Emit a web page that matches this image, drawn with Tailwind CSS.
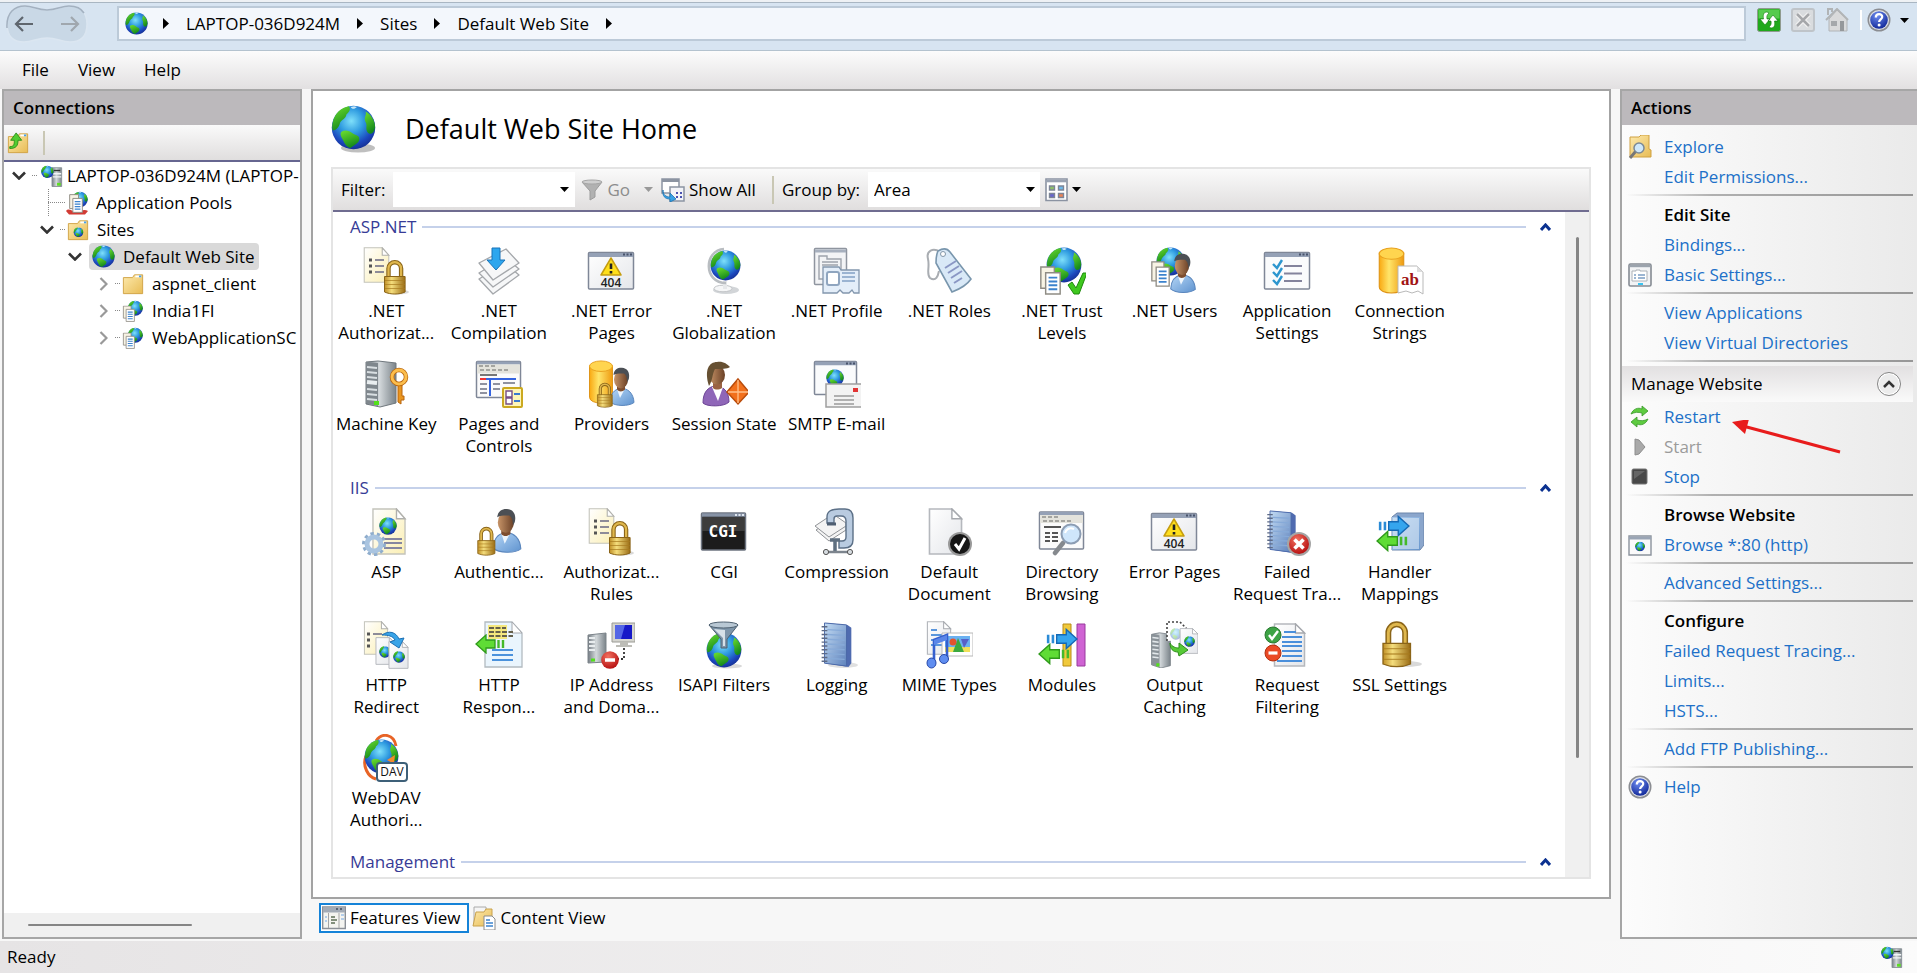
<!DOCTYPE html>
<html lang="en">
<head>
    <meta charset="UTF-8" />
    <meta name="viewport" content="width=device-width, initial-scale=1.0" />
    <title>Internet Information Services (IIS) Manager</title>
    <script src="https://cdn.jsdelivr.net/npm/@tailwindcss/browser@4"></script>
</head>
<body class="h-screen min-h-[640px] flex flex-col overflow-hidden bg-[#f7f7f7] font-['Open_Sans','Noto_Sans',sans-serif] text-[17px] leading-[22px] text-black">

<!-- Shared gradients -->
<svg class="absolute size-0" aria-hidden="true">
    <defs>
        <radialGradient id="gBlue" cx=".45" cy=".35" r=".7"><stop offset="0" stop-color="#7fe0fa" /><stop offset=".4" stop-color="#2f9be0" /><stop offset=".75" stop-color="#1c47bd" /><stop offset="1" stop-color="#142a8a" /></radialGradient>
        <linearGradient id="gGreen" x2=".4" y2="1"><stop offset="0" stop-color="#6fe02f" /><stop offset="1" stop-color="#158a1c" /></linearGradient>
        <linearGradient id="gGold" x2="1"><stop offset="0" stop-color="#c08f26" /><stop offset=".35" stop-color="#f4dd7c" /><stop offset="1" stop-color="#9b6d16" /></linearGradient>
        <linearGradient id="gDb" x2="1"><stop offset="0" stop-color="#f9a912" /><stop offset=".4" stop-color="#ffe56a" /><stop offset="1" stop-color="#ee9a10" /></linearGradient>
        <linearGradient id="gPage" x2="1" y2="1"><stop offset="0" stop-color="#ffffff" /><stop offset="1" stop-color="#fbefb4" /></linearGradient>
        <linearGradient id="gWhite" x2="1" y2="1"><stop offset="0" stop-color="#ffffff" /><stop offset="1" stop-color="#e4e6ea" /></linearGradient>
        <linearGradient id="gShirt" x2="1" y2="1"><stop offset="0" stop-color="#b5d6f6" /><stop offset="1" stop-color="#5f93cf" /></linearGradient>
        <linearGradient id="gSkin" x2="1"><stop offset="0" stop-color="#c79468" /><stop offset="1" stop-color="#6a4026" /></linearGradient>
        <linearGradient id="gSteel" x2="1"><stop offset="0" stop-color="#747c83" /><stop offset=".45" stop-color="#d3d8db" /><stop offset="1" stop-color="#7b848a" /></linearGradient>
        <linearGradient id="gFolder" x2="1" y2="1"><stop offset="0" stop-color="#fdeaae" /><stop offset="1" stop-color="#e8bc55" /></linearGradient>
        <linearGradient id="gBook" x2="1" y2="1"><stop offset="0" stop-color="#c2dbf3" /><stop offset="1" stop-color="#5f83bd" /></linearGradient>
        <radialGradient id="gRed" cx=".4" cy=".3" r=".7"><stop offset="0" stop-color="#f2705f" /><stop offset="1" stop-color="#b81313" /></radialGradient>
        <radialGradient id="gNavy" cx=".4" cy=".25" r=".8"><stop offset="0" stop-color="#6f8df0" /><stop offset="1" stop-color="#0e2596" /></radialGradient>
    </defs>
</svg>

<!-- Icon symbols -->
<svg class="hidden" aria-hidden="true">
    <symbol id="globe" viewBox="0 0 24 24">
        <circle cx="12" cy="12" r="11.6" fill="url(#gBlue)" />
        <path fill="url(#gGreen)" d="M1 9C2 4.500 5.500 1.400 9.500.7c1.200 1.500.3 3.200-1.300 4.300C8 7.400 5.400 7.600 4.700 9.800 4.300 11.500 3 13.300 1 13.600.4 12 .6 10.500 1 9z" />
        <path fill="url(#gGreen)" d="M18.500 3.500c3 1.700 4.800 4.700 5 8-.2 2.400-1.200 4-2.700 3.800-1.700-.3-2.100-2.200-1.900-4 .3-1.700-.9-2.300-.9-4 .1-1.200.9-2.100.5-3.800z" />
        <path fill="url(#gGreen)" d="M5.600 14.200c2-1.200 4.300-.4 5.900.9 1.500 1.100 3.700 1.100 3.600 3.100-.2 2.300-2.800 3-4.800 4.700-2-.4-3.100-2.300-3.900-4.200-.7-1.500-2-3.200-.8-4.500z" />
        <path fill="#e8fbff" opacity=".8" d="M10.500 1c1 1.500 2 1.300 3.300.1L12.300.6z" />
    </symbol>
    <symbol id="lock" viewBox="0 0 24 36">
        <path d="M5.500 19V9.500a6.300 6.300 0 0 1 12.600 0V19" fill="none" stroke="#8a6418" stroke-width="4.400" />
        <path d="M5.500 19V9.500a6.300 6.300 0 0 1 12.600 0V19" fill="none" stroke="#dfb74d" stroke-width="2.200" />
        <path d="M1.500 17.500h20.600V33c-6 2.700-14.500 2.700-20.600 0z" fill="url(#gGold)" stroke="#8a6418" />
        <path d="M2 21.500h20M2 25.500h20M2 29.500h20" stroke="#a87b1e" opacity=".7" />
    </symbol>
    <symbol id="person" viewBox="0 0 28 40">
        <path d="M2 35c.5-8 4-12.500 10-13.500 8-.8 13.500 5 14 14-5 4-19 4-24-.5z" fill="url(#gShirt)" stroke="#5a86bd" />
        <path d="M9 22l3 9 5-9.500z" fill="#eef5fc" />
        <path d="M9 17h8v5.500c-2.500 2.500-6 2.500-8 0z" fill="#7d4d2f" />
        <ellipse cx="13" cy="12.500" rx="7" ry="9" fill="url(#gSkin)" />
        <path d="M5.500 8C6 2 10.500.5 14 .8c5 .4 8 4.200 7 10.200-.3 1.700-1 3-2 4 .3-4-.5-6.500-3-8.500-3.500 0-7.500-.3-10.500 1.500z" fill="#4b4f54" />
    </symbol>
    <symbol id="page" viewBox="0 0 32 44">
        <path d="M1 1h22l8 9v33H1z" fill="url(#gPage)" stroke="#c3c3bb" stroke-width="1.300" />
        <path d="M23 1v9h8z" fill="#fff" stroke="#b0b0ac" stroke-width="1.300" />
    </symbol>
    <symbol id="sheet" viewBox="0 0 32 44">
        <path d="M1 1h21l9 9v33H1z" fill="url(#gWhite)" stroke="#b5b8bd" stroke-width="1.500" />
        <path d="M22 1v9h9z" fill="#fff" stroke="#a5a8ad" stroke-width="1.300" />
    </symbol>
    <symbol id="docs" viewBox="0 0 22 30">
        <path d="M1 1h14v22H1z" fill="#f7f3e4" stroke="#8f8c84" stroke-width="1.500" />
        <path d="M6 7h15v22H6z" fill="#fff" stroke="#8f8c84" stroke-width="1.500" />
        <path d="M9 12h9M9 16h9M9 20h9M9 24h9" stroke="#3b82cd" stroke-width="2" />
    </symbol>
    <symbol id="server" viewBox="0 0 26 46">
        <path d="M1 3l10-2 14 2v40l-12 3-12-4z" fill="url(#gSteel)" stroke="#777f85" />
        <path d="M1 3l10 1v41L1 42z" fill="#8a9298" />
        <path d="M2 7l8 1M2 12l8 1M2 17l8 1M2 22l8 1M2 27l8 1M2 32l8 1" stroke="#e2e7ea" stroke-width="2" />
        <rect x="7" y="40" width="4" height="4" fill="#53e01c" />
    </symbol>
    <symbol id="db" viewBox="0 0 26 46">
        <path d="M1 6v33c0 8 24 8 24 0V6z" fill="url(#gDb)" stroke="#dd9112" />
        <ellipse cx="13" cy="6.500" rx="12" ry="5.500" fill="#ffd54f" stroke="#e8a01c" />
    </symbol>
    <symbol id="book" viewBox="0 0 34 48">
        <path d="M6 1l23 2 4 3v37l-3 4-24-4z" fill="#4f6bb0" />
        <path d="M5 1l23 2v43L5 43z" fill="url(#gBook)" stroke="#4a68a8" />
        <path d="M8 8l18 1M8 13l18 1M8 18l18 1M8 23l18 1M8 28l18 1M8 33l18 1M8 38l18 1" stroke="#87aad8" stroke-width="1.400" />
        <path d="M2 5h6M2 9h6M2 13h6M2 17h6M2 21h6M2 25h6M2 29h6M2 33h6M2 37h6M2 41h6" stroke="#5d6a86" stroke-width="1.500" />
    </symbol>
    <symbol id="arrow-right" viewBox="0 0 30 20">
        <path d="M10 6h9V1l10 9-10 9v-5h-9z" fill="#35a5ee" stroke="#1569b5" stroke-width="1.300" />
        <path d="M2 6v8M6.500 6v8" stroke="#2b8bd6" stroke-width="2.400" />
    </symbol>
    <symbol id="arrow-left" viewBox="0 0 30 20">
        <path d="M20 6h-9V1L1 10l10 9v-5h9z" fill="#5fdc35" stroke="#2f9a1b" stroke-width="1.300" />
        <path d="M28 6v8M23.500 6v8" stroke="#45b92a" stroke-width="2.400" />
    </symbol>
    <symbol id="help" viewBox="0 0 24 24">
        <circle cx="12" cy="12" r="11.500" fill="#8b8d92" />
        <circle cx="12" cy="12" r="10" fill="#dfe1e6" />
        <circle cx="12" cy="12" r="8.800" fill="url(#gNavy)" />
        <path d="M8.800 9.500C8.800 5 15.400 5.200 15.200 9c-.1 2.300-3.100 2.500-3.100 5" fill="none" stroke="#fff" stroke-width="2.200" />
        <circle cx="12.100" cy="17" r="1.500" fill="#fff" />
    </symbol>
    <symbol id="host" viewBox="0 0 24 24">
        <path d="M12 3h10.500v20.500H12z" fill="url(#gSteel)" stroke="#878f95" />
        <path d="M14 6h7" stroke="#333" stroke-width="1.500" />
        <path d="M13 9.500h9M13 13h9" stroke="#f2f4f5" stroke-width="1.500" />
        <path d="M17.500 21h4" stroke="#5be01f" stroke-width="3" />
        <use href="#globe" x="0" y="0" width="14" height="15" />
    </symbol>
    <symbol id="folder" viewBox="0 0 24 24">
        <path d="M1.500 5h10l2-3h9v20.500h-21z" fill="url(#gFolder)" stroke="#cfa143" />
        <path d="M14.500 3.700h6.500" stroke="#fff" stroke-width="2" />
        <path d="M18.500 3.700h2.500" stroke="#4aa0e8" stroke-width="2" />
    </symbol>
    <symbol id="webapp" viewBox="0 0 24 24">
        <use href="#globe" x="6" y="0" width="17" height="18" />
        <use href="#docs" x="0" y="6" width="15" height="18" />
    </symbol>

    <!-- Feature icons, 48 by 48 -->
    <symbol id="f-authz" viewBox="0 0 48 48">
        <use href="#page" x="1" y="0" width="27" height="36" />
        <path d="M7 13h3M7 19h3M7 25h3" stroke="#555" stroke-width="3" />
        <path d="M13 13h9M13 19h9M13 25h9" stroke="#8d8b98" stroke-width="2" />
        <ellipse cx="36" cy="45" rx="11" ry="2.500" fill="#000" opacity=".15" />
        <use href="#lock" x="21" y="12" width="24" height="36" />
    </symbol>
    <symbol id="f-compile" viewBox="0 0 48 48">
        <g fill="#f6f7f8" stroke="#a4a7ab" stroke-width="1.300" stroke-linejoin="round">
            <path d="M4 32l26-16 14 12-26 19z" /><path d="M4 26l26-16 14 12-26 18z" /><path d="M4 16L31 2l13 14-26 17z" />
        </g>
        <path d="M17 1h8v12h5l-9 10-9-10h5z" fill="#2da6ee" stroke="#1873b8" />
    </symbol>
    <symbol id="f-error" viewBox="0 0 48 48">
        <rect x="1.500" y="5.500" width="45" height="36.500" rx="1" fill="url(#gWhite)" stroke="#7f8797" stroke-width="1.500" />
        <path d="M2 8h44" stroke="#95a1b6" stroke-width="4" /><path d="M36 7.500h2m1.500 0h2m1.500 0h2" stroke="#48536b" stroke-width="2" />
        <path d="M24 11l10 17H14z" fill="#ffdf1c" stroke="#c59d10" stroke-linejoin="round" stroke-width="1.500" />
        <path d="M24 16.500v5.500M24 24v2.500" stroke="#222" stroke-width="2.600" />
        <text x="24" y="39.500" text-anchor="middle" font-family="Open Sans" font-size="12" font-weight="600" fill="#222">404</text>
    </symbol>
    <symbol id="f-global" viewBox="0 0 48 48">
        <ellipse cx="26" cy="43" rx="13" ry="4" fill="#d2d5d8" /><ellipse cx="23" cy="41.500" rx="9" ry="3.300" fill="#f5f6f7" stroke="#c2c5c8" />
        <path d="M23 34h4v8h-4z" fill="#e6e8ea" />
        <path d="M24 2C4 3 3 36 26 36" fill="none" stroke="#b9bdc1" stroke-width="2.600" />
        <use href="#globe" x="10" y="3" width="31" height="31" />
    </symbol>
    <symbol id="f-profile" viewBox="0 0 48 48">
        <rect x="1.500" y="1.500" width="32" height="36" rx="1" fill="#f3f4f6" stroke="#8f959f" stroke-width="1.500" />
        <path d="M2 4h31" stroke="#a7b0be" stroke-width="3" />
        <path d="M6 9h8v3h14v20H6zM9 15h16M9 18h16" fill="none" stroke="#9ea3ac" stroke-width="1.400" />
        <path d="M10 20h16l2 3h18v23h-5l-2-3-3 3h-6l-3-3-3 3H10z" fill="#e4eef9" stroke="#8296ad" stroke-width="1.300" />
        <rect x="14" y="25" width="12" height="13" rx="2" fill="#fff" stroke="#8fa5bf" stroke-width="2" />
        <path d="M29 26h13M29 30h13M29 34h13" stroke="#9bb4d2" stroke-width="1.800" />
    </symbol>
    <symbol id="f-roles" viewBox="0 0 48 48">
        <path d="M15 5C8 0 1 4 3 12s-2 15 2 19c6 4 8-2 9-7" fill="none" stroke="#a9adb2" stroke-width="2" />
        <path d="M13 4c5-3 9-3 12 1l21 27c-4 6-11 10-19 13L11 16c0-5 0-8 2-12z" fill="#d9e9f7" stroke="#7996ad" stroke-width="1.600" />
        <circle cx="18" cy="7" r="2.500" fill="#fff" stroke="#8296a8" />
        <path d="M20 21l11-7M23 26l11-7M26 31l11-7M29 36l8-5" stroke="#8a97c4" stroke-width="2" />
    </symbol>
    <symbol id="f-trust" viewBox="0 0 48 48">
        <use href="#globe" x="8" y="0" width="36" height="36" />
        <use href="#docs" x="0" y="19" width="25" height="29" />
        <path d="M30 38l4-3 4 6 7-15h4l-8 21h-5z" fill="#3fc81e" stroke="#1f8a0c" />
    </symbol>
    <symbol id="f-users" viewBox="0 0 48 48">
        <use href="#globe" x="6" y="0" width="29" height="29" />
        <use href="#docs" x="-1" y="14" width="23" height="26" />
        <use href="#person" x="17" y="6" width="32" height="41" />
    </symbol>
    <symbol id="f-appset" viewBox="0 0 48 48">
        <rect x="1.500" y="5.500" width="45" height="36.500" rx="1" fill="#fafbfc" stroke="#7f8797" stroke-width="1.500" />
        <path d="M2 8h44" stroke="#95a1b6" stroke-width="4" /><path d="M36 7.500h2m1.500 0h2m1.500 0h2" stroke="#48536b" stroke-width="2" />
        <path d="M21 19h18M21 26.500h18M21 34h18" stroke="#83839c" stroke-width="1.800" />
        <path d="M10 17l4 4 5-8M10 25l4 4 5-8M10 33l4 4 5-8" fill="none" stroke="#2c96cf" stroke-width="2.400" />
    </symbol>
    <symbol id="f-conn" viewBox="0 0 48 48">
        <use href="#db" x="0" y="0" width="31" height="47" />
        <path d="M22 19h19l6 6v22l-5-3-6 2-6-2-8 2z" fill="#fff" stroke="#b9b9b9" />
        <path d="M41 19v6h6z" fill="#ddd" />
        <text x="34" y="38" text-anchor="middle" font-family="Liberation Serif" font-size="17" font-weight="700" fill="#a11414">ab</text>
    </symbol>
    <symbol id="f-key" viewBox="0 0 48 48">
        <path d="M4 2l12-1 18 2v40l-16 4-14-3z" fill="url(#gSteel)" stroke="#70787e" />
        <path d="M4 2l12 1v43L4 43z" fill="#7f878d" />
        <path d="M5 7l10 1M5 12l10 1M5 17l10 1M5 29l10 1M5 34l10 1M5 39l10 1" stroke="#d9dfe2" stroke-width="2" />
        <path d="M5 22l10 1" stroke="#e9eef0" stroke-width="4" /><path d="M12 43h5" stroke="#53e01c" stroke-width="4" />
        <path d="M36 24v18l3 2v-4h3v-4h-2V24z" fill="#e9951f" stroke="#b8650d" />
        <circle cx="37" cy="17" r="7" fill="none" stroke="#b8650d" stroke-width="4.500" /><circle cx="37" cy="17" r="7" fill="none" stroke="#fbbd4c" stroke-width="3" />
    </symbol>
    <symbol id="f-pages" viewBox="0 0 48 48">
        <rect x="1.500" y="1.500" width="44" height="36" rx="1" fill="#fbfbfb" stroke="#7f8797" stroke-width="1.500" />
        <path d="M2 3h43" stroke="#95a1b6" stroke-width="3" /><path d="M2 9h43" stroke="#e4e3dc" stroke-width="9" />
        <path d="M4 6h18M5 10h28" stroke="#a5a5a0" stroke-width="2" stroke-dasharray="4 2" />
        <path d="M5 15h17" stroke="#777" stroke-width="2" /><path d="M5 19h6" stroke="#e33" stroke-width="2" /><path d="M11 19h30M15 19v17" stroke="#3564df" stroke-width="2" />
        <path d="M5 24h7M5 29h7M5 33h7M18 24h7M18 29h7M28 23h12" stroke="#8f92a0" stroke-width="2" />
        <rect x="28" y="28" width="19" height="19" rx="1" fill="#fff6b8" stroke="#cba920" stroke-width="2" />
        <path d="M31 31h6v6h-6zM31 38h6v6h-6z" fill="#fff" stroke="#774f87" stroke-width="1.400" /><path d="M39 34h6M39 41h6" stroke="#3b7bd0" stroke-width="2" />
    </symbol>
    <symbol id="f-prov" viewBox="0 0 48 48">
        <use href="#db" x="1" y="0" width="26" height="44" />
        <use href="#person" x="19" y="7" width="32" height="40" />
        <use href="#lock" x="9" y="22" width="18" height="26" />
    </symbol>
    <symbol id="f-session" viewBox="0 0 48 48">
        <path d="M3 43c0-11 5-16 12-17 8 0 14 5 14 16-5 5-22 5-26 1z" fill="#8f66b8" stroke="#6d4595" />
        <path d="M12 27l6 14 5-14z" fill="#fff" />
        <path d="M13 20h9v8c-3 2-7 2-9 0z" fill="#9a6243" />
        <ellipse cx="17" cy="15" rx="8" ry="9.500" fill="url(#gSkin)" />
        <path d="M9 26C4 10 9 2 17 2c6-1 10 2 13 5-3 2-9 2-15 2-3 5-2 11-6 17z" fill="#665032" />
        <path d="M38 19l11 13-11 12-11-12z" fill="#f2701c" stroke="#b94c0c" stroke-width="1.500" /><path d="M38 20v23M28 32h20" stroke="#ffc08a" stroke-width="1.300" />
    </symbol>
    <symbol id="f-smtp" viewBox="0 0 48 48">
        <rect x="1.500" y="1.500" width="42" height="33" rx="1" fill="#fafbfc" stroke="#7f8797" stroke-width="1.500" />
        <path d="M2 3.500h41" stroke="#95a1b6" stroke-width="3.500" /><path d="M33 3.500h2m1.500 0h2m1.500 0h2" stroke="#48536b" stroke-width="2" />
        <use href="#globe" x="13" y="9" width="18" height="18" />
        <rect x="13" y="24" width="36" height="23" fill="#f3f3f3" stroke="#9e9e9e" stroke-width="1.500" />
        <path d="M40 28h5v4h-5z" fill="#e23434" /><path d="M21 36h20M21 40h20M21 44h20" stroke="#9b9b9b" stroke-width="1.500" />
    </symbol>
    <symbol id="f-asp" viewBox="0 0 48 48">
        <use href="#page" x="9" y="0" width="36" height="47" />
        <use href="#globe" x="17" y="9" width="18" height="18" />
        <path d="M22 31h18M22 35h18M22 40h18" stroke="#8586a0" stroke-width="2" />
        <circle cx="12" cy="36" r="10" fill="none" stroke="#8fadcd" stroke-width="4" stroke-dasharray="3.200 3" /><circle cx="12" cy="36" r="7" fill="none" stroke="#a9c4e0" stroke-width="5" />
    </symbol>
    <symbol id="f-authn" viewBox="0 0 48 48">
        <use href="#person" x="12" y="0" width="40" height="46" />
        <use href="#lock" x="1" y="18" width="21" height="30" />
    </symbol>
    <symbol id="f-cgi" viewBox="0 0 48 48">
        <rect x="1.500" y="5" width="44" height="37" rx="1" fill="#1c1c1c" stroke="#6d7480" stroke-width="1.500" />
        <path d="M2 9h43v14H2z" fill="#4a4a4a" opacity=".7" /><path d="M2 7h43" stroke="#8793a6" stroke-width="3.500" /><path d="M35 7h2m1.500 0h2m1.500 0h2" stroke="#dfe6ef" stroke-width="2" />
        <text x="23" y="29" text-anchor="middle" font-family="DejaVu Sans Mono" font-size="16" font-weight="700" fill="#fff">CGI</text>
    </symbol>
    <symbol id="f-zip" viewBox="0 0 48 48">
        <g fill="#f4f4f4" stroke="#8f9296"><path d="M3 22l18-12 12 9v3L16 33z" /><path d="M2 18L20 6l13 9v3L16 29z" /></g>
        <path d="M14 15V9c0-6 5-8 12-8h6c6 0 8 4 8 9v22c0 6-4 8-9 8h-5v-7h3c3 0 4-1 4-4V13c0-4-2-5-5-5h-4c-2 0-3 1-3 3v4z" fill="#b9cbe0" stroke="#5c7087" stroke-width="1.400" />
        <path d="M14 16h9" stroke="#4f5f72" stroke-width="3" /><path d="M22 31v14M17 32h10" stroke="#5f6f80" stroke-width="3.500" />
        <path d="M14 44h22" stroke="#7d858e" stroke-width="2.500" /><circle cx="13" cy="44" r="2.600" fill="#d6dbe0" stroke="#555" /><circle cx="37" cy="44" r="2.600" fill="#d6dbe0" stroke="#555" />
    </symbol>
    <symbol id="f-default" viewBox="0 0 48 48">
        <use href="#sheet" x="3" y="0" width="35" height="47" />
        <circle cx="35" cy="36" r="12" fill="#999" /><circle cx="35" cy="36" r="10" fill="#161616" />
        <path d="M30 36l4 5 6-11" fill="none" stroke="#fff" stroke-width="3" />
    </symbol>
    <symbol id="f-dir" viewBox="0 0 48 48">
        <rect x="1.500" y="4" width="44" height="37" rx="1" fill="#fbfbfb" stroke="#7f8797" stroke-width="1.500" />
        <path d="M2 5.500h43" stroke="#95a1b6" stroke-width="3" /><path d="M2 11h43" stroke="#e4e3dc" stroke-width="8" />
        <path d="M4 9h18M5 13h28" stroke="#a5a5a0" stroke-width="2" stroke-dasharray="4 2" />
        <path d="M6 19h17M7 25h5m2 0h6M7 29h5m2 0h6M7 33h5m2 0h6" stroke="#555" stroke-width="2" />
        <path d="M25 35l-8 10" stroke="#85898e" stroke-width="4.500" stroke-linecap="round" />
        <circle cx="33" cy="26" r="9.500" fill="#cfe6fb" stroke="#8c9db3" stroke-width="2" /><path d="M27 25c1-4 5-6 9-4" fill="none" stroke="#fff" stroke-width="2" />
    </symbol>
    <symbol id="f-failed" viewBox="0 0 48 48">
        <use href="#book" x="2" y="2" width="32" height="44" />
        <circle cx="36" cy="36" r="12" fill="#a5a5a5" /><circle cx="36" cy="36" r="10" fill="url(#gRed)" />
        <path d="M31.500 31.500l9 9M40.500 31.500l-9 9" stroke="#fff" stroke-width="3.600" />
    </symbol>
    <symbol id="f-handler" viewBox="0 0 48 48">
        <path d="M16 9l5-4h27v32l-4 5H16z" fill="#8ba6cc" stroke="#6d86ab" /><path d="M16 9h28v33H16z" fill="url(#gShirt)" opacity=".75" />
        <path d="M17 10h26v31H17z" fill="#dce9f7" opacity=".6" />
        <use href="#arrow-right" x="2" y="7" width="32" height="22" />
        <use href="#arrow-left" x="0" y="22" width="32" height="22" />
    </symbol>
    <symbol id="f-redir" viewBox="0 0 48 48">
        <use href="#page" x="0" y="0" width="28" height="34" />
        <path d="M5 13h3M5 19h3M5 25h3" stroke="#555" stroke-width="3" /><path d="M11 13h9" stroke="#8d8b98" stroke-width="2" />
        <use href="#sheet" x="12" y="16" width="23" height="28" /><use href="#globe" x="17" y="25" width="12" height="12" />
        <use href="#sheet" x="25" y="20" width="23" height="28" /><use href="#globe" x="31" y="30" width="12" height="12" />
        <path d="M20 14c7-5 14-3 17 4l5-1-5 10-9-6 5-2c-2-4-7-5-13-5z" fill="#39a4e8" stroke="#1a6fb4" />
    </symbol>
    <symbol id="f-resp" viewBox="0 0 48 48">
        <path d="M10 1h27l10 11v34H10z" fill="#eaf5fd" stroke="#b2bac0" stroke-width="1.300" /><path d="M37 1v11h10z" fill="#fff" stroke="#a5a8ad" />
        <path d="M13 4h19v14H13z" fill="#f5e87d" /><path d="M14 7h17M14 11h24M14 15h24" stroke="#65604b" stroke-width="2" stroke-dasharray="5 1.500" />
        <path d="M17 29h21M17 34h21M17 39h21" stroke="#4b92dc" stroke-width="2" />
        <use href="#arrow-left" x="0" y="13" width="30" height="20" />
    </symbol>
    <symbol id="f-ip" viewBox="0 0 48 48">
        <path d="M1 14l18-2v29L1 42z" fill="url(#gSteel)" stroke="#7c848a" /><path d="M2 17h6M2 21h6M2 25h6M2 29h6" stroke="#e8ecee" stroke-width="2" /><path d="M4 39h4" stroke="#53e01c" stroke-width="3" />
        <path d="M25 2h23v19H25z" fill="#d5d5cf" stroke="#9a9a94" /><path d="M28 4h17v14H28z" fill="#1619c8" /><path d="M28 4h10l-4 14h-6z" fill="#6f87f2" opacity=".7" />
        <path d="M33 21h8v3h4v2H29v-2h4z" fill="#bdbdb7" /><path d="M37 27v11h-6" fill="none" stroke="#333" stroke-width="1.800" stroke-dasharray="2 2" />
        <circle cx="23" cy="39" r="8.800" fill="url(#gRed)" /><path d="M18 39h10" stroke="#fff" stroke-width="3.500" />
    </symbol>
    <symbol id="f-isapi" viewBox="0 0 48 48">
        <ellipse cx="27" cy="45" rx="15" ry="2.500" fill="#000" opacity=".15" />
        <use href="#globe" x="6" y="11" width="36" height="36" />
        <path d="M9 4l12 14v9h6v-9L38 4z" fill="#7f96aa" stroke="#4f6171" /><path d="M14 8l9 9v8h2V9z" fill="#eef4f8" opacity=".8" />
        <ellipse cx="23.500" cy="4" rx="14.500" ry="3" fill="#b9c8d4" stroke="#4f6171" />
    </symbol>
    <symbol id="f-log" viewBox="0 0 48 48">
        <ellipse cx="30" cy="44" rx="15" ry="3" fill="#000" opacity=".12" />
        <use href="#book" x="6" y="1" width="34" height="46" />
    </symbol>
    <symbol id="f-mime" viewBox="0 0 48 48">
        <use href="#sheet" x="0" y="0" width="28" height="34" />
        <path d="M6 9h6M6 14h12M6 19h12M6 24h12" stroke="#5a96dc" stroke-width="1.800" />
        <path d="M17 12h31v23H17z" fill="#fff" stroke="#b8b8b8" /><path d="M20 15h25v16H20z" fill="#6ab1f1" /><path d="M20 26h25v5H20z" fill="#f1e05a" /><path d="M28 31l5-14 6 14z" fill="#3ba93f" /><circle cx="28" cy="21" r="3.500" fill="#e2532d" /><path d="M36 18h8l-5 9z" fill="#5760c8" />
        <path d="M9 42V19l13-5v25" fill="none" stroke="#3560cf" stroke-width="2.600" /><path d="M9 19l13-5v5L9 24z" fill="#5a86e8" />
        <ellipse cx="6.500" cy="42" rx="4.500" ry="5" fill="#5f8df0" stroke="#2848a8" /><ellipse cx="19" cy="38" rx="4.500" ry="4.500" fill="#5f8df0" stroke="#2848a8" />
    </symbol>
    <symbol id="f-modules" viewBox="0 0 48 48">
        <path d="M25 3h8v42h-8z" fill="#f0c93c" stroke="#b88c16" /><path d="M39 3h8v42h-8z" fill="#cf63d3" stroke="#983a9d" />
        <use href="#arrow-right" x="8" y="7" width="32" height="22" />
        <use href="#arrow-left" x="0" y="22" width="32" height="22" />
    </symbol>
    <symbol id="f-cache" viewBox="0 0 48 48">
        <use href="#server" x="0" y="11" width="22" height="36" />
        <path d="M17 20V1h13l6 6v12" fill="#fff" stroke="#444" stroke-width="1.600" stroke-dasharray="2 2" />
        <use href="#globe" x="20" y="7" width="12" height="12" opacity=".35" />
        <use href="#sheet" x="28" y="7" width="22" height="26" /><use href="#globe" x="34" y="15" width="11" height="11" />
        <path d="M20 22c2 4 6 5 9 5v-5l9 7-9 6-1-4c-5 0-8-3-8-9z" fill="#57c936" stroke="#2f8f1b" />
    </symbol>
    <symbol id="f-filter" viewBox="0 0 48 48">
        <use href="#sheet" x="10" y="2" width="33" height="44" />
        <path d="M21 11h12M19 16h20M19 21h20M19 25h20M19 30h20M19 35h20M14 40h25" stroke="#4a8fdb" stroke-width="1.800" />
        <circle cx="10" cy="14" r="8" fill="#3da345" stroke="#2a7a31" /><path d="M6 14l3 4 6-8" fill="none" stroke="#fff" stroke-width="2.400" />
        <circle cx="10" cy="32" r="8" fill="#ea4a26" stroke="#b4300f" /><path d="M5.500 32h9" stroke="#fff" stroke-width="3.200" />
    </symbol>
    <symbol id="f-ssl" viewBox="0 0 48 48">
        <ellipse cx="30" cy="43" rx="16" ry="3" fill="#000" opacity=".15" />
        <use href="#lock" x="3" y="-1" width="36" height="48" />
    </symbol>
    <symbol id="f-dav" viewBox="0 0 48 48">
        <path d="M14 7C20-2 32 0 34 12M4 22C0 32 6 43 14 45" fill="none" stroke="#e86426" stroke-width="3" />
        <use href="#globe" x="2" y="5" width="35" height="35" />
        <path d="M25 26l8-5-1 9z" fill="#f28a2d" />
        <rect x="15" y="29" width="30" height="18" rx="3" fill="#fff" stroke="#3e6078" stroke-width="2" />
        <text x="30" y="42" text-anchor="middle" font-family="Open Sans" font-size="12" fill="#111">DAV</text>
    </symbol>
</svg>

<!-- Address bar -->
<header class="flex h-[51px] shrink-0 items-start border-t-2 border-b border-t-[#eef1f4] border-b-[#b4c3cf] bg-[#d7e4f1] shadow-[inset_0_1px_0_#a9b6c2]">
    <div class="relative mt-[2px] ml-1.5 flex h-10 w-[82px] shrink-0 items-center justify-between px-2">
        <svg class="absolute inset-0 size-full" viewBox="0 0 82 40" fill="none"><path d="M1 20C1 7 9 2 19 2c8 0 12 4 22 4s14-4 22-4c10 0 18 5 18 18s-7 18-17 18c-9 0-13-4-23-4s-14 4-23 4C8 38 1 33 1 20z" fill="#c9d8e6" stroke="#dbe6f1" stroke-width="1.500" /><path d="M1 24C0 8 9 2 19 2c8 0 12 4 22 4s14-4 22-4c7 0 12 2 15 7" stroke="#a3b1c0" stroke-width="1.500" /></svg>
        <button aria-label="Back" class="relative"><svg class="h-5 w-5" viewBox="0 0 20 20" fill="none" stroke="#5f666e" stroke-width="2.200"><path d="M19 10H2M9 3l-7 7 7 7" /></svg></button>
        <button aria-label="Forward" class="relative"><svg class="h-5 w-5" viewBox="0 0 20 20" fill="none" stroke="#a0a7ae" stroke-width="2.200"><path d="M1 10h17M11 3l7 7-7 7" /></svg></button>
    </div>
    <nav class="mt-1 ml-[29px] flex h-[35px] flex-1 items-center border-2 border-[#bccad8] bg-[#f3f7fc] pl-1.5 whitespace-nowrap">
        <svg class="size-[23px]"><use href="#globe" /></svg>
        <svg class="ml-[15px] h-[11px] w-[6px]" viewBox="0 0 6 11"><path d="M0 0l6 5.500L0 11z" /></svg>
        <a href="#" class="mx-[17px]">LAPTOP-036D924M</a>
        <svg class="h-[11px] w-[6px]" viewBox="0 0 6 11"><path d="M0 0l6 5.500L0 11z" /></svg>
        <a href="#" class="mx-[17px]">Sites</a>
        <svg class="h-[11px] w-[6px]" viewBox="0 0 6 11"><path d="M0 0l6 5.500L0 11z" /></svg>
        <a href="#" class="mx-[17px]">Default Web Site</a>
        <svg class="h-[11px] w-[6px]" viewBox="0 0 6 11"><path d="M0 0l6 5.500L0 11z" /></svg>
    </nav>
    <div class="mt-1.5 mr-2 ml-[11px] flex h-6 items-center">
        <button aria-label="Refresh"><svg class="size-6" viewBox="0 0 24 24"><rect x=".5" y=".5" width="23" height="23" rx="2" fill="#20a81c" stroke="#8f9a8f" /><path d="M1.500 1.500h21v9h-21z" fill="#7be36f" opacity=".6" /><path d="M10 4C6 4 6 8 6.500 11H3l5 6 5-6h-3c-.5-3 0-4 2-6zM14 20c4 0 4-4 3.500-7H21l-5-6-5 6h3c.5 3 0 4-2 6z" fill="#fff" stroke="#0c7b0c" stroke-width=".6" /></svg></button>
        <button aria-label="Stop loading" class="ml-2.5"><svg class="size-6" viewBox="0 0 24 24"><rect x="1" y="1" width="22" height="22" rx="2" fill="#d9dcdf" stroke="#bfc4c9" stroke-width="2" /><path d="M6 6l12 12M18 6L6 18" stroke="#f1f1f1" stroke-width="5" /><path d="M6 6l12 12M18 6L6 18" stroke="#a5a7aa" stroke-width="2.500" /></svg></button>
        <button aria-label="Home" class="ml-2.5"><svg class="size-6" viewBox="0 0 24 24"><path d="M4 11v12h18V11L12 2z" fill="#d9dadb" stroke="#b1b4b7" /><path d="M1 12L12 1l11 11M3 7V1h4v3" fill="none" stroke="#b1b4b6" stroke-width="2" /><path d="M6 13h6v5H6z" fill="#a5a8ab" /><path d="M15 13h4v10h-4z" fill="#95989b" /></svg></button>
        <span class="mr-[5px] ml-[11px] h-5 w-0.5 bg-white"></span>
        <button aria-label="Help" class="flex items-center gap-[9px]"><svg class="size-6"><use href="#help" /></svg><svg class="h-[5px] w-[9px]" viewBox="0 0 9 5"><path d="M0 0h9L4.500 5z" /></svg></button>
    </div>
</header>

<!-- Menu bar -->
<nav class="flex h-[38px] shrink-0 items-center gap-[29px] bg-linear-to-b from-[#fcfcfc] to-[#e2e0e1] pl-[22px]">
    <button>File</button>
    <button>View</button>
    <button>Help</button>
</nav>

<main class="flex min-h-0 flex-1 pb-0.5 pl-0.5">

    <!-- Connections -->
    <aside class="flex w-[300px] shrink-0 flex-col border-2 border-[#a6a6a6] bg-white">
        <h2 class="flex h-[34px] shrink-0 items-center bg-[#bcb9bc] pl-[9px] font-semibold">Connections</h2>
        <div class="flex h-[37px] shrink-0 items-center border-b-2 border-[#666690] bg-linear-to-b from-[#fafafa] to-[#e0dede] pl-[3px]">
            <button aria-label="Up one level"><svg class="size-[22px]" viewBox="0 0 24 24"><use href="#folder" width="24" height="24" /><path d="M3 16c5 0 5-3 5-7H4l6-8 6 8h-4c0 6-2 9-9 9z" fill="#52cc30" stroke="#2a8c18" /></svg></button>
            <span class="ml-3.5 h-6 w-0.5 bg-[#c9c7b4]"></span>
        </div>
        <ul class="min-h-0 flex-1 overflow-hidden whitespace-nowrap [&_button]:flex [&_button]:w-[14px] [&_button]:shrink-0 [&_button]:justify-center [&_i]:h-0 [&_i]:shrink-0 [&_i]:border-t [&_i]:border-dotted [&_i]:border-[#888] [&_li>div]:flex [&_li>div]:h-[27px] [&_li>div]:items-center [&_svg]:shrink-0">
            <li>
                <div class="pl-2">
                    <button aria-label="Collapse server"><svg class="h-[9px] w-[14px]" viewBox="0 0 14 9" fill="none" stroke="#333" stroke-width="2.600"><path d="M1 1.500l6 6 6-6" /></svg></button>
                    <i class="mx-1 ml-1.5 w-[5px]"></i>
                    <svg class="size-[22px]"><use href="#host" /></svg>
                    <a href="#" class="ml-1">LAPTOP-036D924M (LAPTOP-</a>
                </div>
                <ul class="ml-11">
                    <li class="relative">
                        <div>
                            <i class="w-[17px]"></i>
                            <svg class="size-6" viewBox="0 0 24 24"><use href="#globe" x="7" y="0" width="16" height="17" /><path d="M1 20c3-4 6 1 9 0 4 2 8-3 13 0l-3 3.500H4z" fill="#d23b34" /><use href="#docs" x="3" y="3" width="16" height="19" /></svg>
                            <a href="#" class="ml-[7px]">Application Pools</a>
                        </div>
                        <span class="absolute top-0 left-0 h-[27px] border-l border-dotted border-[#888]"></span>
                    </li>
                    <li>
                        <div class="-ml-2">
                            <button aria-label="Collapse sites"><svg class="h-[9px] w-[14px]" viewBox="0 0 14 9" fill="none" stroke="#333" stroke-width="2.600"><path d="M1 1.500l6 6 6-6" /></svg></button>
                            <i class="mx-0.5 ml-1.5 w-[5px]"></i>
                            <svg class="size-[22px]" viewBox="0 0 24 24"><use href="#folder" width="24" height="24" /><use href="#globe" x="7" y="9" width="11" height="11" /></svg>
                            <a href="#" class="ml-2">Sites</a>
                        </div>
                        <ul class="ml-5">
                            <li>
                                <div>
                                    <button aria-label="Collapse Default Web Site"><svg class="h-[9px] w-[14px]" viewBox="0 0 14 9" fill="none" stroke="#333" stroke-width="2.600"><path d="M1 1.500l6 6 6-6" /></svg></button>
                                    <a href="#" class="ml-[7px] flex h-[27px] items-center rounded bg-[#d9d9d9] pr-1 pl-[3px]"><svg class="mr-2 size-[23px]"><use href="#globe" /></svg>Default Web Site</a>
                                </div>
                                <ul class="ml-7">
                                    <li><div>
                                        <button aria-label="Expand aspnet_client"><svg class="h-[14px] w-[9px]" viewBox="0 0 9 14" fill="none" stroke="#999" stroke-width="2.200"><path d="M1.500 1l6 6-6 6" /></svg></button>
                                        <i class="mx-0.5 ml-[5px] w-[5px]"></i>
                                        <svg class="size-[22px]"><use href="#folder" /></svg>
                                        <a href="#" class="ml-2">aspnet_client</a>
                                    </div></li>
                                    <li><div>
                                        <button aria-label="Expand India1FI"><svg class="h-[14px] w-[9px]" viewBox="0 0 9 14" fill="none" stroke="#999" stroke-width="2.200"><path d="M1.500 1l6 6-6 6" /></svg></button>
                                        <i class="mx-0.5 ml-[5px] w-[5px]"></i>
                                        <svg class="size-[22px]"><use href="#webapp" /></svg>
                                        <a href="#" class="ml-2">India1FI</a>
                                    </div></li>
                                    <li><div>
                                        <button aria-label="Expand WebApplicationSC"><svg class="h-[14px] w-[9px]" viewBox="0 0 9 14" fill="none" stroke="#999" stroke-width="2.200"><path d="M1.500 1l6 6-6 6" /></svg></button>
                                        <i class="mx-0.5 ml-[5px] w-[5px]"></i>
                                        <svg class="size-[22px]"><use href="#webapp" /></svg>
                                        <a href="#" class="ml-2">WebApplicationSC</a>
                                    </div></li>
                                </ul>
                            </li>
                        </ul>
                    </li>
                </ul>
            </li>
        </ul>
        <div class="flex h-6 shrink-0 items-center bg-[#f0f0f0] pl-6"><span class="h-0.5 w-[164px] rounded bg-[#858585]"></span></div>
    </aside>

    <!-- Feature workspace -->
    <section class="flex min-w-0 flex-1 flex-col px-[9px]">
        <div class="flex min-h-0 flex-1 flex-col border-2 border-[#a3a3a3] bg-white px-[18px] pb-[18px]">
            <div class="flex h-[76px] shrink-0 items-center">
                <svg class="h-12 w-[46px]" viewBox="0 0 46 48"><ellipse cx="27" cy="43" rx="17" ry="4.500" fill="#000" opacity=".25" /><use href="#globe" width="45" height="45" /></svg>
                <h1 class="ml-7 text-[27px] leading-8">Default Web Site Home</h1>
            </div>
            <div class="flex min-h-0 flex-1 flex-col border-2 border-[#e4e4e4]">
                <div class="flex h-[43px] shrink-0 items-center border-b-2 border-[#6f6c90] bg-linear-to-b from-[#fafafa] to-[#e0dede] pl-2 whitespace-nowrap">
                    <label for="filter">Filter:</label>
                    <div class="ml-2 flex h-[35px] w-[182px] items-center bg-white">
                        <input id="filter" type="text" class="h-full min-w-0 flex-1 px-1.5 outline-none" />
                        <button aria-label="Recent filters" class="px-[6px]"><svg class="h-[5px] w-[9px]" viewBox="0 0 9 5"><path d="M0 0h9L4.500 5z" /></svg></button>
                    </div>
                    <button class="ml-[6px] flex items-center text-[#8c8c8c]"><svg class="mr-1 size-[22px]" viewBox="0 0 22 22"><path d="M1 3l8 9v9l5-3v-6l7-9z" fill="#b1b1b1" stroke="#9b9b9b" /><ellipse cx="11" cy="3" rx="10" ry="2" fill="#cfcfcf" stroke="#a5a5a5" /></svg>Go</button>
                    <button aria-label="Go options" class="ml-3.5"><svg class="h-[5px] w-[9px]" viewBox="0 0 9 5"><path d="M0 0h9L4.500 5z" fill="#999" /></svg></button>
                    <button class="ml-2 flex items-center"><svg class="mr-1 h-6 w-[24px]" viewBox="0 0 24 24"><path d="M1 1h17v14H1z" fill="#fff" stroke="#8c94a2" stroke-width="1.500" /><path d="M1 2.500h17" stroke="#8c94a2" stroke-width="3" /><path d="M9 9h14v14H9z" fill="#f3f4f8" stroke="#8c94a2" stroke-width="1.500" /><path d="M15 15h2m2 0h2m-6 4h2m2 0h2" stroke="#4b52b0" stroke-width="2" /><path d="M2 12c0 5 3 7 7 7v-4l6 6-6 3v-3c-5 0-8-3-7-9z" fill="#38a2e6" stroke="#1f73b0" stroke-width=".8" /></svg>Show All</button>
                    <span class="mr-2 ml-4 h-7 w-0.5 bg-[#c9c7b4]"></span>
                    <label for="group">Group by:</label>
                    <div class="relative ml-2 h-[35px] w-[172px] bg-white">
                        <select id="group" class="size-full appearance-none pl-[6px] text-[17px] outline-none"><option>Area</option></select>
                        <svg class="pointer-events-none absolute top-[15px] right-[5px] h-[5px] w-[9px]" viewBox="0 0 9 5"><path d="M0 0h9L4.500 5z" /></svg>
                    </div>
                    <button aria-label="View mode" class="ml-[5px] flex items-center gap-1"><svg class="h-6 w-[23px]" viewBox="0 0 23 24"><path d="M1 1h21v21.500H1z" fill="#fff" stroke="#8b93a2" stroke-width="1.600" /><path d="M1 3h21" stroke="#9aa3b2" stroke-width="2.600" /><g stroke="#7d8596" stroke-width="1.400"><path d="M4.500 8h5v4h-5z" fill="#8dbf6a" /><path d="M13.500 8h5v4h-5z" fill="#6db9ea" /><path d="M4.500 15.500h5v4h-5z" fill="#6764cf" /><path d="M13.500 15.500h5v4h-5z" fill="#ec8255" /></g></svg><svg class="h-[5px] w-[9px]" viewBox="0 0 9 5"><path d="M0 0h9L4.500 5z" /></svg></button>
                </div>

                <div class="flex min-h-0 flex-1">
                    <div class="min-w-0 flex-1 overflow-hidden [&_a]:flex [&_a]:flex-col [&_a]:items-center [&_a]:text-center [&_a]:whitespace-nowrap [&_a>svg]:mb-[5px] [&_a>svg]:size-12 [&_a>svg]:shrink-0 [&_a>svg]:overflow-visible">
                        <h3 class="flex h-[30px] items-center pr-3.5 pl-[17px] text-[#373b96]">ASP.NET<span class="mr-1 ml-1.5 h-0.5 flex-1 bg-[#c5d1ea]"></span><button aria-label="Collapse ASP.NET" class="ml-2.5"><svg class="h-2 w-[11px]" viewBox="0 0 11 8" fill="none" stroke="#0b3190" stroke-width="3"><path d="M1 7l4.500-5L10 7" /></svg></button></h3>
                        <div class="-ml-[3px] grid max-w-[1126px] auto-rows-[113px] grid-cols-10 pt-[5px]">
                            <a href="#"><svg><use href="#f-authz" /></svg>.NET<br />Authorizat...</a>
                            <a href="#"><svg><use href="#f-compile" /></svg>.NET<br />Compilation</a>
                            <a href="#"><svg><use href="#f-error" /></svg>.NET Error<br />Pages</a>
                            <a href="#"><svg><use href="#f-global" /></svg>.NET<br />Globalization</a>
                            <a href="#"><svg><use href="#f-profile" /></svg>.NET Profile</a>
                            <a href="#"><svg><use href="#f-roles" /></svg>.NET Roles</a>
                            <a href="#"><svg><use href="#f-trust" /></svg>.NET Trust<br />Levels</a>
                            <a href="#"><svg><use href="#f-users" /></svg>.NET Users</a>
                            <a href="#"><svg><use href="#f-appset" /></svg>Application<br />Settings</a>
                            <a href="#"><svg><use href="#f-conn" /></svg>Connection<br />Strings</a>
                            <a href="#"><svg><use href="#f-key" /></svg>Machine Key</a>
                            <a href="#"><svg><use href="#f-pages" /></svg>Pages and<br />Controls</a>
                            <a href="#"><svg><use href="#f-prov" /></svg>Providers</a>
                            <a href="#"><svg><use href="#f-session" /></svg>Session State</a>
                            <a href="#"><svg><use href="#f-smtp" /></svg>SMTP E-mail</a>
                        </div>

                        <h3 class="flex h-[30px] items-center pr-3.5 pl-[17px] text-[#373b96]">IIS<span class="mr-1 ml-1.5 h-0.5 flex-1 bg-[#c5d1ea]"></span><button aria-label="Collapse IIS" class="ml-2.5"><svg class="h-2 w-[11px]" viewBox="0 0 11 8" fill="none" stroke="#0b3190" stroke-width="3"><path d="M1 7l4.500-5L10 7" /></svg></button></h3>
                        <div class="-ml-[3px] grid max-w-[1126px] auto-rows-[113px] grid-cols-10 pt-[5px]">
                            <a href="#"><svg><use href="#f-asp" /></svg>ASP</a>
                            <a href="#"><svg><use href="#f-authn" /></svg>Authentic...</a>
                            <a href="#"><svg><use href="#f-authz" /></svg>Authorizat...<br />Rules</a>
                            <a href="#"><svg><use href="#f-cgi" /></svg>CGI</a>
                            <a href="#"><svg><use href="#f-zip" /></svg>Compression</a>
                            <a href="#"><svg><use href="#f-default" /></svg>Default<br />Document</a>
                            <a href="#"><svg><use href="#f-dir" /></svg>Directory<br />Browsing</a>
                            <a href="#"><svg><use href="#f-error" /></svg>Error Pages</a>
                            <a href="#"><svg><use href="#f-failed" /></svg>Failed<br />Request Tra...</a>
                            <a href="#"><svg><use href="#f-handler" /></svg>Handler<br />Mappings</a>
                            <a href="#"><svg><use href="#f-redir" /></svg>HTTP<br />Redirect</a>
                            <a href="#"><svg><use href="#f-resp" /></svg>HTTP<br />Respon...</a>
                            <a href="#"><svg><use href="#f-ip" /></svg>IP Address<br />and Doma...</a>
                            <a href="#"><svg><use href="#f-isapi" /></svg>ISAPI Filters</a>
                            <a href="#"><svg><use href="#f-log" /></svg>Logging</a>
                            <a href="#"><svg><use href="#f-mime" /></svg>MIME Types</a>
                            <a href="#"><svg><use href="#f-modules" /></svg>Modules</a>
                            <a href="#"><svg><use href="#f-cache" /></svg>Output<br />Caching</a>
                            <a href="#"><svg><use href="#f-filter" /></svg>Request<br />Filtering</a>
                            <a href="#"><svg><use href="#f-ssl" /></svg>SSL Settings</a>
                            <a href="#"><svg><use href="#f-dav" /></svg>WebDAV<br />Authori...</a>
                        </div>

                        <h3 class="flex h-[30px] items-center pr-3.5 pl-[17px] text-[#373b96]">Management<span class="mr-1 ml-1.5 h-0.5 flex-1 bg-[#c5d1ea]"></span><button aria-label="Collapse Management" class="ml-2.5"><svg class="h-2 w-[11px]" viewBox="0 0 11 8" fill="none" stroke="#0b3190" stroke-width="3"><path d="M1 7l4.500-5L10 7" /></svg></button></h3>
                    </div>
                    <div class="flex w-6 shrink-0 flex-col items-center bg-[#f0f0f0] pt-[25px]"><span class="h-[521px] w-[3px] rounded bg-[#858585]"></span></div>
                </div>
            </div>
        </div>
        <div class="flex h-10 shrink-0 items-start pt-1 pl-2">
            <button class="flex h-[30px] items-center border-2 border-[#1583d8] bg-white pr-[7px] pl-px"><svg class="mr-1 size-6" viewBox="0 0 24 24"><path d="M.7 1h22.600v21.500H.7z" fill="#f4f4f0" stroke="#8b9097" stroke-width="1.400" /><path d="M1 4h22" stroke="#a3abb6" stroke-width="5" /><path d="M14 3h2m2 0h2" stroke="#444d5e" stroke-width="1.500" /><path d="M6.500 7v15M17 7v15" stroke="#a5a5a5" /><path d="M9 11h4M9 14h6M9 17h4" stroke="#5d6d55" stroke-width="1.700" /><path d="M3 11h2M3 15h2M19 9h3M19 13h3" stroke="#9cc0e8" stroke-width="1.500" /></svg>Features View</button>
            <button class="ml-[3px] flex h-[30px] items-center"><svg class="mr-1 size-6" viewBox="0 0 24 24"><path d="M2 1h12v18H2z" fill="#f5f5f5" stroke="#aaa" /><path d="M1 20L4 6h8l2-3h6v17z" fill="url(#gFolder)" stroke="#c9a24d" /><path d="M12 10h8l3 3v11H12z" fill="#fff" stroke="#8c8c8c" /><path d="M14 14h4M14 17h7M14 20h7" stroke="#3b82cd" stroke-width="1.600" /></svg>Content View</button>
        </div>
    </section>

    <!-- Actions -->
    <aside class="relative flex w-[297px] shrink-0 flex-col border-2 border-r-0 border-[#a6a6a6] bg-linear-to-r from-[#fcfcfc] to-[#eaeaea]">
        <h2 class="flex h-[34px] shrink-0 items-center bg-[#bcb9bc] pl-[9px] font-semibold">Actions</h2>
        <div class="flex flex-col pt-[7px] whitespace-nowrap text-[#2070c8] [&>a]:flex [&>a]:h-[30px] [&>a]:items-center [&>a]:pl-[42px] [&>button]:flex [&>button]:h-[30px] [&>button]:items-center [&>button]:pl-[42px] [&>h4]:flex [&>h4]:h-[30px] [&>h4]:items-center [&>h4]:pl-[42px] [&>h4]:font-semibold [&>h4]:text-black [&>hr]:mt-[2px] [&>hr]:mr-1 [&>hr]:mb-[4px] [&>hr]:ml-1 [&>hr]:h-[2px] [&>hr]:border-0 [&>hr]:bg-linear-to-r [&>hr]:from-transparent [&>hr]:via-[#b0b0b0] [&>hr]:via-30% [&>hr]:to-[#979797] [&_svg]:-ml-9 [&_svg]:mr-3 [&_svg]:size-6">
            <a href="#"><svg viewBox="0 0 24 24"><path d="M2 2h9l2-2h8v14l2 1v7H2z" fill="url(#gFolder)" stroke="#cfa143" /><path d="M8 16l-6 7" stroke="#777" stroke-width="3" /><circle cx="11" cy="13" r="5" fill="#cfe8fa" stroke="#7b8996" stroke-width="1.500" /></svg>Explore</a>
            <a href="#">Edit Permissions...</a>
            <hr />
            <h4>Edit Site</h4>
            <a href="#">Bindings...</a>
            <a href="#"><svg viewBox="0 0 24 24"><rect x="1" y="1" width="22" height="22" rx="1.500" fill="#f2f3f5" stroke="#858b93" stroke-width="1.600" /><path d="M1.500 3h21" stroke="#9ba3ad" stroke-width="2.400" /><path d="M4 8h4v-1h4v1h7v10H4z" fill="#fff" stroke="#adb2b8" /><path d="M6 12h2m2 0h7M6 15h2m2 0h7" stroke="#7b9dc4" stroke-width="1.300" /><path d="M10 21h5" stroke="#39c3f0" stroke-width="2" /></svg>Basic Settings...</a>
            <hr />
            <a href="#">View Applications</a>
            <a href="#">View Virtual Directories</a>
            <hr />
            <div class="mr-1 flex h-9 items-center justify-between bg-linear-to-b from-[#e2e0e1] to-[#fafafa] pr-3 pl-[9px] text-black">Manage Website
                <button aria-label="Collapse Manage Website" class="flex size-6 items-center justify-center rounded-full border border-[#858585] bg-[#ececec] shadow-[inset_0_0_0_1px_#fff] [&>svg]:m-0 [&>svg]:h-2 [&>svg]:w-3"><svg viewBox="0 0 12 8" fill="none" stroke="#333" stroke-width="2.500"><path d="M1 7l5-5 5 5" /></svg></button>
            </div>
            <button><svg viewBox="0 0 24 24"><path d="M3 9c2-5 7-7 11-5V1l6 5-6 5V8c-4-1-7-1-11 1zM20 14c-2 5-7 7-11 5v3l-6-5 6-5v3c4 1 7 1 11-1z" fill="#5ecb40" stroke="#38982a" stroke-width=".8" /></svg>Restart</button>
            <button disabled class="text-[#9b9b9b]"><svg viewBox="0 0 24 24"><path d="M7 4l4 1 6 7-6 7-4 1z" fill="#a9a9a9" stroke="#8e8e8e" /></svg>Start</button>
            <button><svg viewBox="0 0 24 24"><rect x="4" y="4" width="15" height="15" rx="1.500" fill="#484848" stroke="#777" /><path d="M6 6h11L6 14z" fill="#666" /></svg>Stop</button>
            <hr />
            <h4>Browse Website</h4>
            <a href="#"><svg viewBox="0 0 24 24"><path d="M1 3h22v19H1z" fill="#fafafa" stroke="#8b929c" stroke-width="1.400" /><path d="M1 5h22" stroke="#9aa5b5" stroke-width="3" /><use href="#globe" x="7" y="8.500" width="10" height="10" /></svg>Browse *:80 (http)</a>
            <hr />
            <a href="#">Advanced Settings...</a>
            <hr />
            <h4>Configure</h4>
            <a href="#">Failed Request Tracing...</a>
            <a href="#">Limits...</a>
            <a href="#">HSTS...</a>
            <hr />
            <a href="#">Add FTP Publishing...</a>
            <hr />
            <a href="#"><svg><use href="#help" /></svg>Help</a>
        </div>
        <!-- Callout arrow over the Restart action -->
        <svg class="pointer-events-none absolute top-[329px] left-[109px] h-9 w-28" viewBox="0 0 112 36"><path d="M12 6l97 26" stroke="#e81c1c" stroke-width="3" /><path d="M1 2l17-3-4 15z" fill="#e81c1c" /></svg>
    </aside>
</main>

<!-- Status bar -->
<footer class="flex h-8 shrink-0 items-center justify-between bg-linear-to-r from-[#e6e4e5] to-[#fbfbfb] pr-[14px] pl-[7px]">
    <span>Ready</span>
    <svg class="size-[22px]"><use href="#host" /></svg>
</footer>

</body>
</html>
